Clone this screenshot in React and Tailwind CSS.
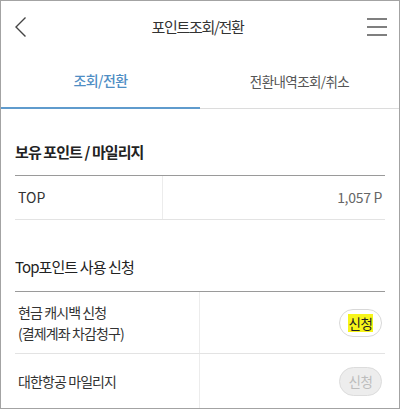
import React from 'react';

const FONT = { fontFamily: '"Noto Sans CJK KR", "Noto Sans", sans-serif' };

function BackIcon() {
  return (
    <svg width="14" height="22" viewBox="0 0 14 22" fill="none">
      <path d="M11.5 1.5 L2 11 L11.5 20.5" stroke="#444" strokeWidth="1.4" />
    </svg>
  );
}

function MenuIcon() {
  return (
    <svg width="20" height="18" viewBox="0 0 20 18" fill="none">
      <path d="M0 1h20M0 9h20M0 17h20" stroke="#555" strokeWidth="1.4" />
    </svg>
  );
}

export default function App() {
  return (
    <div style={FONT} className="w-[400px] h-[409px] overflow-hidden bg-white border border-[#a3a3a3] text-[#333]">
      {/* header */}
      <div className="h-[51px] flex items-center justify-between pl-[13px] pr-[12px]">
        <BackIcon />
        <h1 className="text-[15px] tracking-[-1.3px] text-[#333] pt-[1px]">포인트조회/전환</h1>
        <MenuIcon />
      </div>

      {/* tabs */}
      <div className="flex h-[57px]">
        <div className="w-1/2 flex items-center justify-center border-b-2 border-[#5f9bcd] pt-[2px]">
          <span className="text-[14px] tracking-[-0.6px] text-[#4f8ec4] font-medium">조회/전환</span>
        </div>
        <div className="w-1/2 flex items-center justify-center border-b border-[#dcdcdc] pt-[2px]">
          <span className="text-[13.5px] tracking-[-0.6px] text-[#555]">전환내역조회/취소</span>
        </div>
      </div>

      <div className="px-[14px]">
        {/* section 1 */}
        <h2 className="mt-[32px] text-[15px] tracking-[-0.9px] font-bold text-[#222] leading-[22px]">보유 포인트 / 마일리지</h2>
        <div className="mt-[12px] border-t-[1.5px] border-[#9a9a9a]">
          <div className="grid grid-cols-[148px_1fr] h-[44px] border-b border-[#e3e3e3]">
            <div className="flex items-center pl-[3px] border-r border-[#ececec] text-[14px] text-[#333]">TOP</div>
            <div className="flex items-center justify-end pr-[3px] text-[14px] text-[#666] tracking-[-0.3px]">1,057 P</div>
          </div>
        </div>

        {/* section 2 */}
        <h2 className="mt-[36px] text-[15px] tracking-[-0.9px] text-[#222] leading-[22px]">Top포인트 사용 신청</h2>
        <div className="mt-[13px] border-t-[1.5px] border-[#9a9a9a]">
          <div className="grid grid-cols-[185px_1fr] h-[62px] border-b border-[#e3e3e3]">
            <div className="flex flex-col justify-center pl-[3px] border-r border-[#ececec] text-[14px] tracking-[-0.9px] leading-[21px] text-[#333]">
              <span>현금 캐시백 신청</span>
              <span>(결제계좌 차감청구)</span>
            </div>
            <div className="flex items-center justify-end pr-[3px]">
              <button className="w-[43px] h-[28px] rounded-full border border-[#d8d8d8] bg-white flex items-center justify-center">
                <span className="bg-[#f7f51a] text-[13.5px] tracking-[-0.5px] text-[#222] leading-[18px] px-[1px]">신청</span>
              </button>
            </div>
          </div>
          <div className="grid grid-cols-[185px_1fr] h-[60px]">
            <div className="flex items-center pl-[3px] border-r border-[#ececec] text-[14px] tracking-[-0.9px] text-[#333] pb-[6px]">
              대한항공 마일리지
            </div>
            <div className="flex items-center justify-end pr-[3px] pb-[6px]">
              <button className="w-[43px] h-[29px] rounded-full border border-[#dcdcdc] bg-[#ededed] flex items-center justify-center text-[13.5px] tracking-[-0.5px] text-[#bdbdbd]">
                신청
              </button>
            </div>
          </div>
        </div>
      </div>
    </div>
  );
}
